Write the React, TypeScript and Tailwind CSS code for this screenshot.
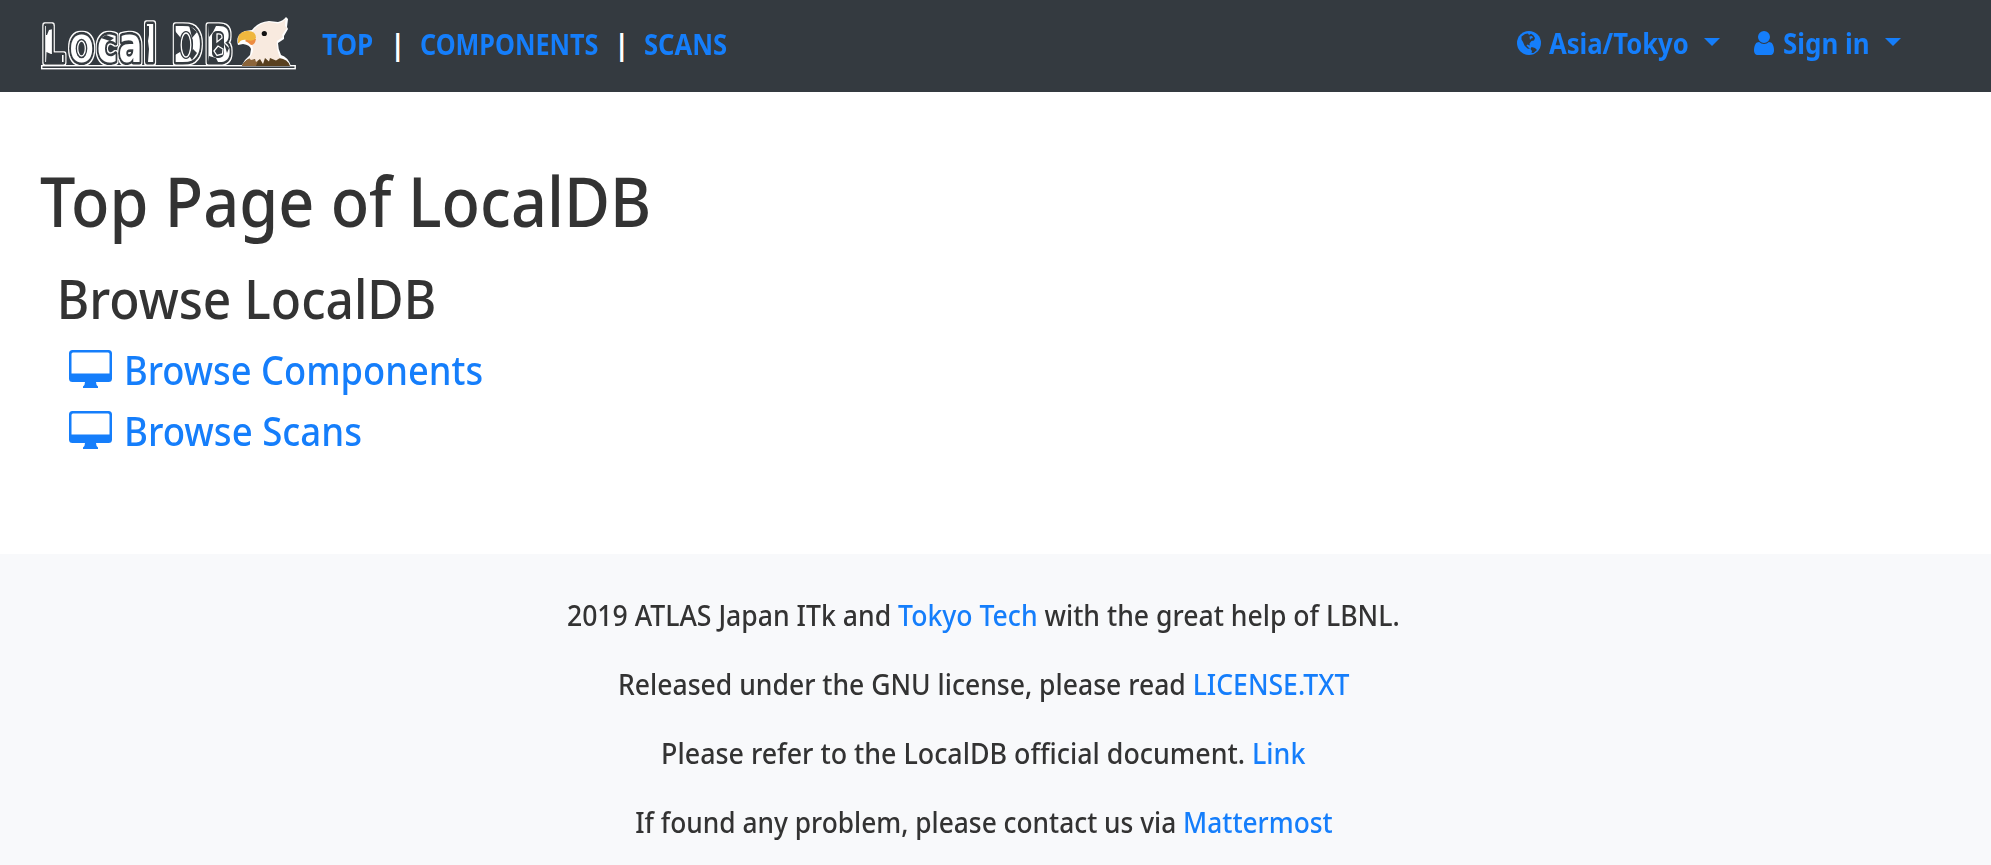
import React from "react";

const BLUE = "#157efb";
const DARK = "#343a40";

function Logo() {
  return (
    <svg className="h-[68px] w-[280px]" viewBox="0 0 280 68">
      <defs>
        <filter id="rim" x="0" y="-60" width="400" height="80" filterUnits="userSpaceOnUse">
          <feMorphology in="SourceAlpha" operator="dilate" radius="1.4 1" result="grown" />
          <feFlood floodColor="#fff" />
          <feComposite in2="grown" operator="in" result="edge" />
          <feMerge>
            <feMergeNode in="edge" />
            <feMergeNode in="SourceGraphic" />
          </feMerge>
        </filter>
      </defs>
      <text
        transform="translate(0 57) scale(0.72 1)"
        x="16.500 55 93 123 158.500 180 198 243.500"
        fontFamily="'DejaVu Sans', sans-serif"
        fontWeight="700"
        fontSize="49"
        strokeLinejoin="round"
        fill="#fff"
        stroke={DARK}
        strokeWidth="5.500"
        filter="url(#rim)"
        style={{ paintOrder: "stroke" }}
      >
        Local DB
      </text>
      <g fill={DARK}>
        <path d="M16 20H23V24L19 25 17 30H16ZM16.500 47 21 49H32V58H16Z" />
        <path d="M71 33 76 30 84 33 80 36Z" />
        <path d="M116.500 21H119V30L118 36 119 44 118 57H116Z" />
        <path d="M145 26 150 32V47L145 50ZM159 20 167 27 162 33ZM163 44 167 48 162 55 158 49Z" />
        <path d="M178 20 186 21 183 27 179 32ZM194 38 199 43 197 48ZM179 51 186 53 188 57H178Z" />
        <rect x="182" y="26" width="12" height="27" rx="5" />
        <ellipse cx="156" cy="40" rx="7" ry="14" />
        <ellipse cx="51.500" cy="43.500" rx="5.800" ry="9.800" />
      </g>
      <g fill={DARK} stroke="#fff" strokeWidth="1.3">
        <ellipse cx="51.500" cy="43.500" rx="3.800" ry="7.500" />
        <ellipse cx="156" cy="40" rx="4.800" ry="12" />
        <path d="M187 29Q192.500 28 192 33L187 37Z" />
        <path d="M184 46 188 41 193 44 192.500 49 187 50.500Z" />
      </g>
      <rect x="11.700" y="60.700" width="253.500" height="3" fill={DARK} stroke="#fff" strokeWidth="1.400" />
      <path d="M212 60Q215 54 220 50L221 44Q220 40 213 39L208 40Q205 30 215 26L222 25Q228 17 239 16L248 17Q253 16 256 12L258 14 257 22 258 24 254 31 254 34 248 38Q248 44 251 50Q258 52 261 61Z" fill="#fff" />
      <path d="M212 61Q213 57 220 53H249Q258 54 260 61Z" fill="#59401f" />
      <path d="M212 61Q213 57 220 53L228 56 226 61Z" fill="#8b6439" />
      <path d="M219 53Q225 47 222 40L217 35 216 27Q223 27 223 26Q229 18 239 17L248 18.500Q253 17 255.500 14L255 21 257 23 252 30 253 32 247 36Q246 44 250 53L246 55.500 240 53 239 56.500 235 53 233 59 230 54 226 57 225 54 221 55Z" fill="#f8eadf" />
      <path d="M217 34 226 34Q225 40 221 40Q218 37 215 36Z" fill="#ed8c42" />
      <path d="M208 38Q207 27 216 26Q226 25 226 33Q223 37 217 35Q211 34 209 38Z" fill="#efb73e" />
      <circle cx="234.300" cy="28.500" r="2.600" fill="#111" />
    </svg>
  );
}

function GlobeIcon() {
  return (
    <svg className="h-[24px] w-[24px]" viewBox="0 0 24 24">
      <circle cx="12" cy="12" r="12" fill={BLUE} />
      <path d="M4.500 5.500 8 3 11 2.500 12 4 14 2.800 16.500 4.500 18 7 17 9.500 14.500 10 12.500 12.500 12.800 14.500 10.500 13.500 9.500 14.500 11.500 16.500 13 18 10.500 17.500 7.500 14.500 6 11 4.500 8.500ZM14.500 16 18 17 20 19 16.500 22 14.500 22 15 20 13.500 18Z" fill={DARK} />
      <path d="M12.500 5.500 15 5 16 7 14 7.500 13 9Z" fill={BLUE} />
    </svg>
  );
}

function UserIcon() {
  return (
    <svg className="h-[24px] w-[20px]" viewBox="256 128 1280 1536" preserveAspectRatio="none">
      <path fill={BLUE} d="M1536 1399q0 109-62.500 187t-150.500 78h-854q-88 0-150.500-78t-62.500-187q0-85 8.500-160.500t31.500-152 58.500-131 94-89 134.500-34.500q131 128 313 128t313-128q76 0 134.500 34.500t94 89 58.500 131 31.500 152 8.500 160.500zm-256-887q0 159-112.500 271.500t-271.500 112.500-271.500-112.500-112.500-271.500 112.500-271.500 271.500-112.500 271.500 112.500 112.500 271.500z" />
    </svg>
  );
}

function MonitorIcon() {
  return (
    <svg className="h-[38px] w-[43px]" viewBox="0 0 43 38">
      <path fillRule="evenodd" fill={BLUE} d="M3.500 0H39.500Q43 0 43 3.500V28.500Q43 32 39.500 32H27Q27 35 29 36.500V38H14V36.500Q16 35 16 32H3.500Q0 32 0 28.500V3.500Q0 0 3.500 0ZM4 2.500Q2.500 2.500 2.500 4V23.500H40.500V4Q40.500 2.500 39 2.500Z" />
    </svg>
  );
}

function Caret() {
  return (
    <svg className="h-[8px] w-[16px]" viewBox="0 0 16 8">
      <path d="M0 0H16L8 8Z" fill={BLUE} />
    </svg>
  );
}

export default function App() {
  return (
    <div className="flex h-[865px] w-full flex-col overflow-hidden bg-white font-['Noto_Sans',sans-serif] text-[#333] [font-variant-ligatures:none]">
      <header className="flex h-[92px] shrink-0 items-start bg-[#343a40] pt-[5px] pl-[30px] text-[28px] leading-[40px] font-bold whitespace-nowrap text-[#157efb]">
        <Logo />
        <nav className="flex pt-[19px] pl-[12px]">
          <a className="w-[68px] origin-left scale-x-[0.93]">TOP</a>
          <span className="w-[30px] text-white">|</span>
          <a className="w-[194px] origin-left scale-x-[0.9]">COMPONENTS</a>
          <span className="w-[30px] text-white">|</span>
          <a className="origin-left scale-x-[0.915]">SCANS</a>
        </nav>
        <div className="mr-[90px] ml-auto flex pt-[18px]">
          <div className="flex w-[237px]">
            <div className="mt-[8px] mr-[8px]"><GlobeIcon /></div>
            <span className="w-[155px] origin-left scale-x-[0.915]">Asia/Tokyo</span>
            <div className="mt-[15px]"><Caret /></div>
          </div>
          <div className="flex">
            <div className="mt-[8px] mr-[9px]"><UserIcon /></div>
            <span className="w-[102px] origin-left scale-x-[0.925]">Sign in</span>
            <div className="mt-[15px]"><Caret /></div>
          </div>
        </div>
      </header>
      <main className="flex h-[462px] shrink-0 flex-col items-start font-medium whitespace-nowrap">
        <h1 className="mt-[66px] ml-[40px] origin-left scale-x-[0.912] text-[69px] leading-[84px]">Top Page of LocalDB</h1>
        <h2 className="mt-[23px] ml-[55px] origin-left scale-x-[0.903] pl-[2px] text-[55px] leading-[66px]">Browse LocalDB</h2>
        <div className="mt-[15px] ml-[69px] flex text-[40px] leading-[48px] text-[#157efb]">
          <div className="mt-[4px] mr-[12px]"><MonitorIcon /></div>
          <a className="origin-left scale-x-[0.907]">Browse Components</a>
        </div>
        <div className="mt-[13px] ml-[69px] flex text-[40px] leading-[48px] text-[#157efb]">
          <div className="mt-[4px] mr-[12px]"><MonitorIcon /></div>
          <a className="origin-left scale-x-[0.915]">Browse Scans</a>
        </div>
      </main>
      <footer className="flex grow flex-col items-center gap-[27px] bg-[#f8f9fb] pt-[40px] pr-[24px] text-[28px] leading-[42px] font-medium whitespace-nowrap">
        <p className="scale-x-[0.95]">2019 ATLAS Japan ITk and <a className="text-[#157efb]">Tokyo Tech</a> with the great help of LBNL.</p>
        <p className="scale-x-[0.948]">Released under the GNU license, please read <a className="text-[#157efb]">LICENSE.TXT</a></p>
        <p className="scale-x-[0.958]">Please refer to the LocalDB official document. <a className="text-[#157efb]">Link</a></p>
        <p className="scale-x-[0.94]">If found any problem, please contact us via <a className="text-[#157efb]">Mattermost</a></p>
      </footer>
    </div>
  );
}
